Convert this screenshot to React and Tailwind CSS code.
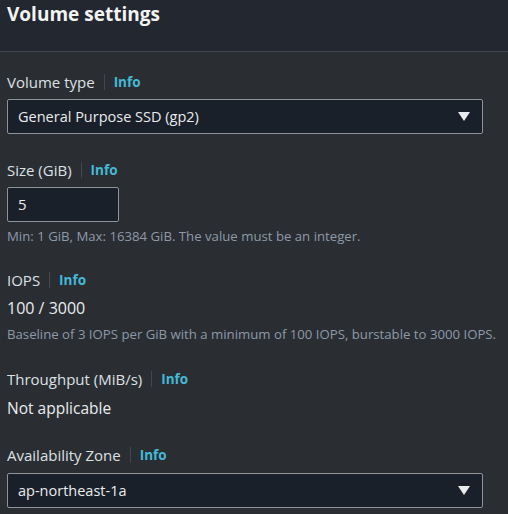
import React from 'react';

const font = { fontFamily: '"Open Sans", "Noto Sans", sans-serif' };

const Label = ({ children, className = '' }) => (
  <div className={`flex items-center h-[22px] ${className}`}>
    <span className="text-[15px] text-[#dde0e3]">{children}</span>
    <span className="mx-[9px] h-[16px] w-px bg-[#414750]" />
    <a className="text-[13.5px] font-bold text-[#44b9d6]">Info</a>
  </div>
);

const Caret = () => (
  <svg width="12" height="9" viewBox="0 0 12 9" className="shrink-0">
    <path d="M0 0 H12 L6 9 Z" fill="#e9ebed" />
  </svg>
);

const SelectBox = ({ value, className = '' }) => (
  <div className={`flex items-center justify-between h-[35px] w-[476px] rounded-[2px] border border-[#8d9399] bg-[#1a2029] pl-[10px] pr-[12px] ${className}`}>
    <span className="text-[14.5px] text-[#e9ebed]">{value}</span>
    <Caret />
  </div>
);

export default function App() {
  return (
    <div className="w-[508px] h-[514px] overflow-hidden bg-[#2a2e33]" style={font}>
      <div className="h-[52px] bg-[#232730] border-b border-[#414750] px-[7px]">
        <h2 className="text-[19px] font-bold text-[#f2f3f3] leading-[28px]">Volume settings</h2>
      </div>

      <div className="flex flex-col px-[7px]">
        <Label className="mt-[19px]">Volume type</Label>
        <SelectBox value="General Purpose SSD (gp2)" className="mt-[6px]" />

        <Label className="mt-[25px]">Size (GiB)</Label>
        <div className="mt-[6px] flex items-center h-[35px] w-[112px] rounded-[2px] border border-[#8d9399] bg-[#1a2029] pl-[10px]">
          <span className="text-[15px] text-[#e9ebed]">5</span>
        </div>
        <p className="mt-[6px] h-[16px] leading-[16px] text-[13.2px] text-[#8d99a8] whitespace-nowrap">
          Min: 1 GiB, Max: 16384 GiB. The value must be an integer.
        </p>

        <Label className="mt-[25px]">IOPS</Label>
        <div className="mt-[6px] h-[22px] leading-[22px] text-[16px] text-[#e9ebed]">100 / 3000</div>
        <p className="mt-[7px] h-[16px] leading-[16px] text-[13.2px] text-[#8d99a8] whitespace-nowrap">
          Baseline of 3 IOPS per GiB with a minimum of 100 IOPS, burstable to 3000 IOPS.
        </p>

        <Label className="mt-[26px]">Throughput (MiB/s)</Label>
        <div className="mt-[7px] h-[22px] leading-[22px] text-[15.5px] text-[#e9ebed]">Not applicable</div>

        <Label className="mt-[25px]">Availability Zone</Label>
        <SelectBox value="ap-northeast-1a" className="mt-[7px]" />
      </div>
    </div>
  );
}
